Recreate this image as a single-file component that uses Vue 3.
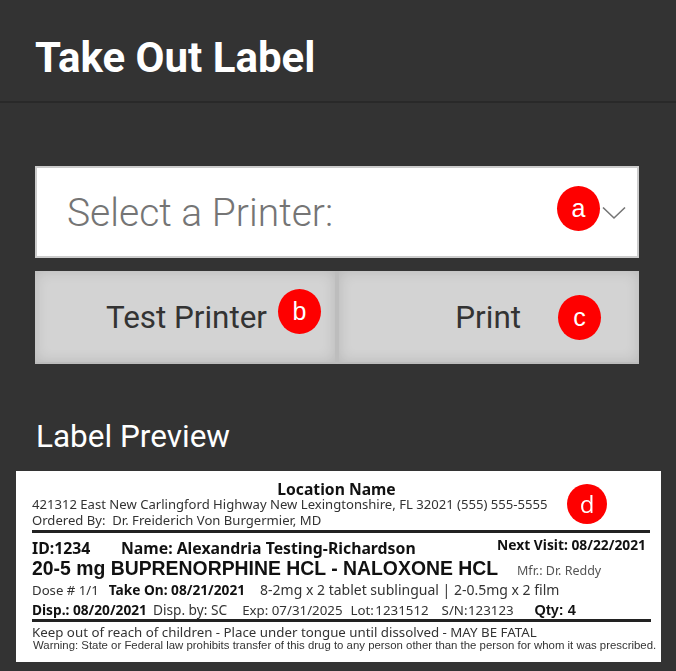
<script setup>
// annotated take out label screen
const printerPlaceholder = 'Select a Printer:'
</script>

<template>
  <div class="screen">
    <header class="top-bar">
      <h1>Take Out Label</h1>
    </header>

    <div class="controls">
      <div class="printer-select">
        <span class="placeholder">{{ printerPlaceholder }}</span>
        <span class="marker marker-a">a</span>
        <svg class="chevron" viewBox="0 0 24 14" width="24" height="14">
          <path d="M1 1.5 L12 12 L23 1.5" fill="none" stroke="#757575" stroke-width="1.6" />
        </svg>
      </div>
      <div class="button-row">
        <button class="action action-test">
          <span>Test Printer</span>
          <span class="marker marker-b">b</span>
        </button>
        <button class="action action-print">
          <span>Print</span>
          <span class="marker marker-c">c</span>
        </button>
      </div>
    </div>

    <h2 class="preview-title">Label Preview</h2>

    <section class="label">
      <span class="marker marker-d">d</span>
      <div class="location">Location Name</div>
      <div class="address">421312 East New Carlingford Highway New Lexingtonshire, FL 32021 (555) 555-5555</div>
      <div class="ordered">Ordered By:&nbsp; Dr. Freiderich Von Burgermier, MD</div>
      <div class="rule"></div>
      <div class="row id-row">
        <b class="id">ID:1234</b>
        <b class="name">Name: Alexandria Testing-Richardson</b>
        <b class="visit">Next Visit: 08/22/2021</b>
      </div>
      <div class="row drug-row">
        <b class="drug">20-5 mg BUPRENORPHINE HCL - NALOXONE HCL</b>
        <span class="mfr">Mfr.: Dr. Reddy</span>
      </div>
      <div class="row dose-row">
        <span class="dose">Dose # 1/1</span>
        <b>Take On: 08/21/2021</b>
        <span class="strength">8-2mg x 2 tablet sublingual | 2-0.5mg x 2 film</span>
      </div>
      <div class="row disp-row">
        <b>Disp.: 08/20/2021</b>
        <span>Disp. by: SC</span>
        <span class="exp">Exp: 07/31/2025</span>
        <span class="lot">Lot: 1231512</span>
        <span class="serial">S/N: 123123</span>
        <b class="qty">Qty: 4</b>
      </div>
      <div class="rule rule-low"></div>
      <div class="keep">Keep out of reach of children - Place under tongue until dissolved - MAY BE FATAL</div>
      <div class="warning">Warning: State or Federal law prohibits transfer of this drug to any person other than the person for whom it was prescribed.</div>
    </section>
  </div>
</template>

<style>
html,
body {
  margin: 0;
  background: #333333;
}
</style>

<style scoped>
.screen {
  width: 676px;
  height: 671px;
  overflow: hidden;
  background: #333333;
  font-family: Roboto, "Liberation Sans", sans-serif;
}

.top-bar {
  height: 101px;
  border-bottom: 2px solid #292929;
  padding-left: 35px;
  display: flex;
  align-items: center;
}

.top-bar h1 {
  margin: 0;
  font-size: 42px;
  font-weight: 700;
  color: #ffffff;
  position: relative;
  top: 7px;
}

.controls {
  margin: 63px 37px 0 35px;
  display: flex;
  flex-direction: column;
  gap: 13px;
}

.printer-select {
  height: 92px;
  box-sizing: border-box;
  border: 2px solid #cccccc;
  background: #ffffff;
  display: flex;
  align-items: center;
  padding: 0 11px 0 30px;
  position: relative;
}

.placeholder {
  font-size: 39px;
  font-weight: 300;
  color: #757575;
  flex: 1;
  padding-top: 2px;
}

.chevron {
  margin-top: 2px;
}

.button-row {
  display: flex;
  height: 93px;
}

.action {
  flex: 0 0 50%;
  box-sizing: border-box;
  border: none;
  background: #d3d3d3;
  box-shadow: inset 0 0 14px rgba(0, 0, 0, 0.13);
  font-family: inherit;
  font-size: 31.4px;
  font-weight: 400;
  color: #333333;
  position: relative;
  padding: 2px 0 0;
  border-bottom: 2px solid #bcbcbc;
}

.action-test {
  text-align: right;
  padding-right: 68px;
  border-right: 2px solid #bdbdbd;
}

.action-print {
  text-align: right;
  padding-right: 118px;
  border-left: 2px solid #bdbdbd;
}

.marker {
  position: absolute;
  width: 43px;
  height: 45px;
  border-radius: 50%;
  background: #fe0000;
  color: #ffffff;
  font-family: "Liberation Sans", Arial, sans-serif;
  font-size: 25px;
  line-height: 45px;
  text-align: center;
}

.marker-a {
  left: 520px;
  top: 18px;
}

.marker-b {
  left: 243px;
  top: 18px;
}

.marker-c {
  left: 219px;
  top: 24px;
}

.marker-d {
  left: 551px;
  top: 13px;
  width: 40px;
  height: 40px;
  line-height: 40px;
  font-family: "Open Sans", sans-serif;
  font-size: 24px;
}

.preview-title {
  margin: 54px 0 16px 36px;
  font-size: 31.5px;
  line-height: 37px;
  font-weight: 400;
  color: #ffffff;
}

.label {
  position: relative;
  margin-left: 16px;
  width: 645px;
  height: 191px;
  box-sizing: border-box;
  padding: 11px 10px 0 16px;
  background: #ffffff;
  color: #333333;
  font-family: "Noto Sans", "Open Sans", sans-serif;
  font-size: 13.1px;
  line-height: 16px;
  filter: blur(0.35px);
}

.location {
  text-align: center;
  font-size: 15.7px;
  font-weight: 700;
  color: #111111;
  line-height: 15px;
  padding-right: 10px;
}

.address {
  line-height: 15px;
}

.ordered {
  line-height: 17px;
}

.rule {
  height: 3px;
  background: #222222;
  margin-top: 1px;
  margin-right: 1px;
}

.rule-low {
  margin: 1px 0 0;
}

.row {
  display: flex;
  align-items: baseline;
  white-space: nowrap;
}

.id-row {
  height: 27px;
  align-items: center;
  color: #111111;
  font-size: 15.8px;
  padding-top: 3px;
  box-sizing: border-box;
}

.id {
  width: 89px;
}

.name {
  flex: 1;
}

.visit {
  font-size: 13.8px;
  margin-right: 5px;
  margin-top: -6px;
}

.drug-row {
  height: 19px;
}

.drug {
  font-family: "Liberation Sans", Arial, sans-serif;
  font-size: 19.4px;
  color: #111111;
  width: 485px;
}

.mfr {
  font-size: 12.5px;
  color: #555555;
}

.dose-row {
  height: 22px;
  align-items: center;
  font-size: 13.7px;
  gap: 10px;
}

.dose {
  font-size: 13.2px;
}

.strength {
  font-size: 14px;
}

.dose-row b {
  color: #111111;
  margin-right: 5px;
}

.disp-row {
  height: 17px;
  align-items: center;
  font-size: 13.7px;
  gap: 6px;
}

.disp-row b {
  color: #111111;
}

.exp,
.lot,
.serial {
  font-size: 13.3px;
}

.exp {
  margin-left: 9px;
}

.lot {
  margin-left: 2px;
  word-spacing: -2px;
}

.serial {
  margin-left: 7px;
  word-spacing: -3px;
}

.qty {
  margin-left: 15px;
  font-family: "Liberation Sans", Arial, sans-serif;
  font-size: 14.5px;
}

.keep {
  margin-top: 3px;
  font-size: 13.3px;
  line-height: 14px;
}

.warning {
  font-family: "Liberation Sans", Arial, sans-serif;
  font-size: 11.4px;
  line-height: 12px;
  padding-left: 1px;
  white-space: nowrap;
}
</style>
